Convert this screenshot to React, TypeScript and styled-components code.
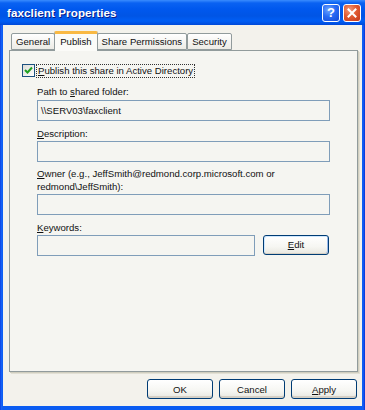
import React from 'react';
import styled, { createGlobalStyle } from 'styled-components';

const Global = createGlobalStyle`
  html, body { margin: 0; padding: 0; background: #ffffff; }
  body { font-family: "Liberation Sans", Arial, sans-serif; }
`;

const Window = styled.div`
  width: 365px;
  height: 410px;
  box-sizing: border-box;
  display: flex;
  flex-direction: column;
  background: linear-gradient(to right, #0831d9 0px, #1662f6 1px, #0a5cf2 3px, #0a5cf2 362px, #1662f6 363px, #0831d9 365px);
`;

const TitleBar = styled.div`
  height: 25px;
  flex: none;
  display: flex;
  align-items: center;
  padding: 0 4px 0 7px;
  background: linear-gradient(to bottom, #3a8cfe 0px, #0a62f2 3px, #0058ee 9px, #0055e5 16px, #005ef5 21px, #0049d8 25px);
`;

const Title = styled.div`
  flex: 1;
  color: #ffffff;
  font-weight: bold;
  font-size: 11.6px;
  letter-spacing: 0.1px;
  text-shadow: 1px 1px 0 #0a1e8a;
`;

const CaptionButton = styled.div<{ $kind: 'help' | 'close' }>`
  width: 18px;
  height: 18px;
  box-sizing: border-box;
  margin-left: 3px;
  border: 1px solid #ffffff;
  border-radius: 3px;
  display: flex;
  align-items: center;
  justify-content: center;
  background: ${(p) =>
    p.$kind === 'close'
      ? 'radial-gradient(circle at 35% 30%, #f49a7b 0%, #e15b32 45%, #c3381a 100%)'
      : 'radial-gradient(circle at 35% 30%, #6fa6ff 0%, #2a6cf4 45%, #1349d6 100%)'};
  color: #ffffff;
  font-weight: bold;
  font-size: 13px;
`;

const Client = styled.div`
  flex: 1;
  margin: 0 3px 4px 3px;
  background: #f3f2ec;
  display: flex;
  flex-direction: column;
  padding: 7px 4px 0 6px;
`;

const TabRow = styled.div`
  display: flex;
  align-items: flex-end;
  height: 18px;
  padding-left: 2px;
`;

const Tab = styled.div<{ $active?: boolean }>`
  position: relative;
  box-sizing: border-box;
  height: ${(p) => (p.$active ? '20px' : '17px')};
  margin-bottom: ${(p) => (p.$active ? '-1px' : '0')};
  margin-left: ${(p) => (p.$active ? '-1px' : '0')};
  margin-right: ${(p) => (p.$active ? '-1px' : '0')};
  z-index: ${(p) => (p.$active ? 2 : 1)};
  padding: ${(p) => (p.$active ? '2px 5px 0 5px' : '2px 4px 0 4px')};
  border: 1px solid #919b9c;
  border-bottom: ${(p) => (p.$active ? 'none' : '1px solid #919b9c')};
  border-top: ${(p) => (p.$active ? '3px solid #f9b943' : '1px solid #919b9c')};
  border-radius: 2px 2px 0 0;
  background: ${(p) => (p.$active ? '#fbfbf8' : 'linear-gradient(to bottom, #ffffff, #ecebe5)')};
  font-size: 9.6px;
  line-height: 12px;
  color: #111;
  white-space: nowrap;
`;

const Panel = styled.div`
  width: 349px;
  height: 322px;
  box-sizing: border-box;
  border: 1px solid #919b9c;
  background: #f5f5f1;
  box-shadow: 1px 1px 0 #d0cebf, 2px 2px 0 #e2e0d4;
  display: flex;
  flex-direction: column;
  padding: 13px 0 0 27px;
`;

const CheckRow = styled.label`
  display: flex;
  align-items: center;
  height: 13px;
  margin-left: -15px;
`;

const CheckBox = styled.span`
  width: 13px;
  height: 13px;
  box-sizing: border-box;
  border: 1px solid #1c5180;
  background: linear-gradient(135deg, #dcdcd7, #ffffff);
  display: flex;
  align-items: center;
  justify-content: center;
  margin-right: 2px;
`;

const FocusText = styled.span`
  font-size: 9.6px;
  line-height: 12px;
  color: #111;
  padding: 0 1px;
  outline: 1px dotted #333;
`;

const Label = styled.div<{ $top: number }>`
  margin-top: ${(p) => p.$top}px;
  font-size: 9.6px;
  line-height: 12.5px;
  color: #111;
`;

const Input = styled.div<{ $w: number; $top: number }>`
  margin-top: ${(p) => p.$top}px;
  width: ${(p) => p.$w}px;
  height: 21px;
  box-sizing: border-box;
  border: 1px solid #7f9db9;
  background: #f5f5f1;
  font-size: 9.6px;
  line-height: 19px;
  padding-left: 3px;
  color: #111;
`;

const InputRow = styled.div`
  display: flex;
  align-items: flex-start;
  gap: 8px;
`;

const Button = styled.div<{ $focus?: boolean }>`
  width: 66px;
  height: 20px;
  box-sizing: border-box;
  border: 1px solid #003c74;
  border-radius: 3px;
  background: linear-gradient(to bottom, #ffffff 0%, #f6f6f2 60%, #e8e7e0 100%);
  box-shadow: ${(p) =>
    p.$focus ? 'inset 0 -1px 0 #d6d0c5, inset 1px 1px 0 #cee7ff, inset -1px -1px 0 #98b8ea' : 'inset 0 -2px 0 #d6d0c5'};
  display: flex;
  align-items: center;
  justify-content: center;
  font-size: 9.6px;
  color: #111;
`;

const ButtonBar = styled.div`
  display: flex;
  justify-content: flex-end;
  gap: 6px;
  margin-top: 7px;
  padding-right: 1px;
`;

const U = styled.span`
  text-decoration: underline;
`;

export default function App() {
  return (
    <>
      <Global />
      <Window>
        <TitleBar>
          <Title>faxclient Properties</Title>
          <CaptionButton $kind="help">?</CaptionButton>
          <CaptionButton $kind="close">
            <svg width="10" height="10" viewBox="0 0 10 10">
              <path d="M1.5 1.5 L8.5 8.5 M8.5 1.5 L1.5 8.5" stroke="#fff" strokeWidth="2" strokeLinecap="square" />
            </svg>
          </CaptionButton>
        </TitleBar>
        <Client>
          <TabRow>
            <Tab>General</Tab>
            <Tab $active>Publish</Tab>
            <Tab>Share Permissions</Tab>
            <Tab>Security</Tab>
          </TabRow>
          <Panel>
            <CheckRow>
              <CheckBox>
                <svg width="9" height="9" viewBox="0 0 9 9">
                  <path d="M1 4 L3.5 6.5 L8 1.5" stroke="#21a121" strokeWidth="2" fill="none" />
                </svg>
              </CheckBox>
              <FocusText>
                <U>P</U>ublish this share in Active Directory
              </FocusText>
            </CheckRow>
            <Label $top={9}>
              Path to <U>s</U>hared folder:
            </Label>
            <Input $w={293} $top={1}>\\SERV03\faxclient</Input>
            <Label $top={7}>
              <U>D</U>escription:
            </Label>
            <Input $w={293} $top={1} />
            <Label $top={6}>
              <U>O</U>wner (e.g., JeffSmith@redmond.corp.microsoft.com or
              <br />
              redmond\JeffSmith):
            </Label>
            <Input $w={293} $top={1} />
            <Label $top={7}>
              <U>K</U>eywords:
            </Label>
            <InputRow>
              <Input $w={218} $top={0} />
              <Button $focus>
                <span>
                  <U>E</U>dit
                </span>
              </Button>
            </InputRow>
          </Panel>
          <ButtonBar>
            <Button>OK</Button>
            <Button>Cancel</Button>
            <Button>
              <span>
                <U>A</U>pply
              </span>
            </Button>
          </ButtonBar>
        </Client>
      </Window>
    </>
  );
}
